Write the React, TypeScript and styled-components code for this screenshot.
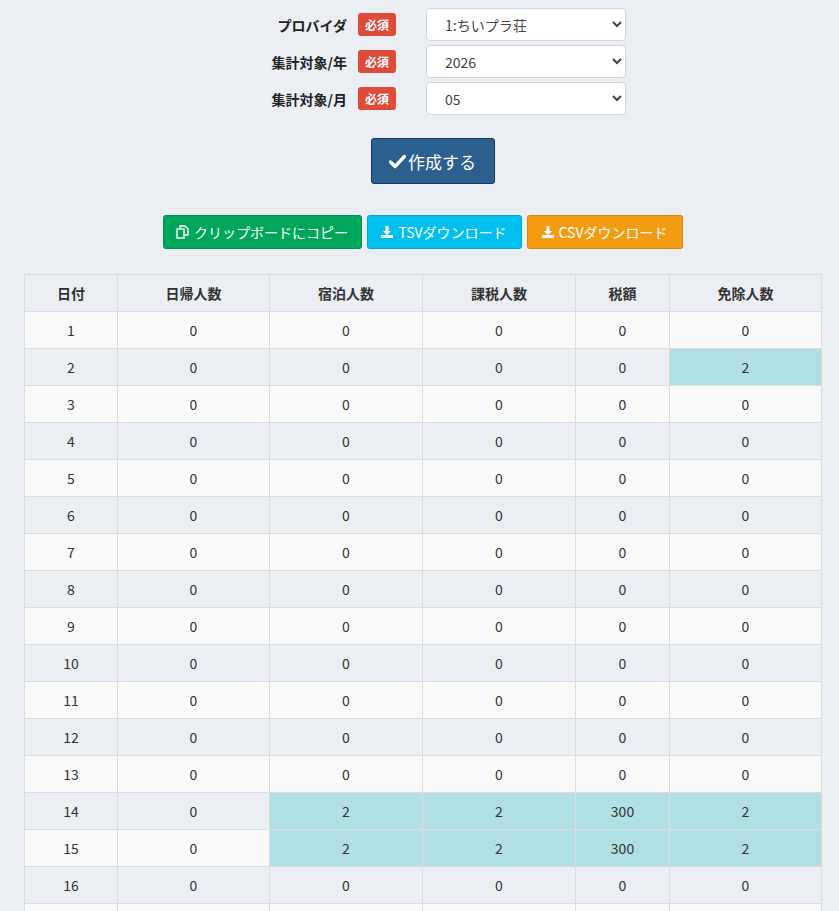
import styled, { createGlobalStyle } from "styled-components";

const Global = createGlobalStyle`
  body {
    margin: 0;
    background: #ebeef3;
    font-family: "Noto Sans CJK JP", "Noto Sans", sans-serif;
    color: #333;
  }
`;

const Page = styled.div`
  padding: 8px 18px 0 24px;
  overflow: hidden;
  height: 911px;
  box-sizing: border-box;
`;

const Form = styled.div`
  display: flex;
  flex-direction: column;
  gap: 4px;
`;

const FormRow = styled.div`
  display: grid;
  grid-template-columns: 334px 68px 200px;
  align-items: center;
`;

const Label = styled.label`
  text-align: right;
  font-weight: bold;
  font-size: 14px;
  color: #222;
  padding-right: 11px;
`;

const Badge = styled.span`
  width: 38px;
  height: 23px;
  background: #dd4b39;
  color: #fff;
  font-size: 12px;
  font-weight: bold;
  border-radius: 3px;
  display: flex;
  align-items: center;
  justify-content: center;
`;

const Select = styled.select`
  height: 33px;
  width: 200px;
  border: 1px solid #d2d6de;
  border-radius: 4px;
  background: #fff;
  padding: 0 10px 0 14px;
  font-size: 14px;
  color: #444;
  font-family: inherit;
`;

const Center = styled.div`
  display: flex;
  justify-content: center;
  gap: ${(p: { gap?: number }) => p.gap ?? 0}px;
  margin-top: ${(p: { top?: number }) => p.top ?? 0}px;
`;

const Submit = styled.button`
  width: 124px;
  height: 46px;
  background: #2a5f8e;
  border: 1px solid #173a5a;
  border-radius: 3px;
  color: #fff;
  font-size: 17px;
  font-family: inherit;
  display: flex;
  align-items: center;
  justify-content: center;
  gap: 2px;
  margin-left: 20px;
`;

const ActionBtn = styled.button<{ bg: string; w: number }>`
  width: ${(p) => p.w}px;
  height: 34px;
  background: ${(p) => p.bg};
  border: 1px solid rgba(0, 0, 0, 0.12);
  border-radius: 3px;
  color: #fff;
  font-size: 14px;
  font-family: inherit;
  display: flex;
  align-items: center;
  justify-content: center;
  gap: 5px;
`;

const Table = styled.table`
  margin-top: 25px;
  width: 797px;
  border-collapse: collapse;
  font-size: 14px;
  text-align: center;
  table-layout: fixed;
  & th, & td {
    border: 1px solid #dcdcdc;
    height: 36px;
    padding: 0;
  }
  & th { background: #ebeef3; font-weight: bold; color: #333; }
`;

const Row = styled.tr<{ odd: boolean }>`
  background: ${(p) => (p.odd ? "#f9f9f9" : "#ebeef3")};
`;

const Cell = styled.td<{ hl?: boolean }>`
  background: ${(p) => (p.hl ? "#b0dfe5" : "transparent")};
`;

const Check = () => (
  <svg width="17" height="15" viewBox="0 0 17 15">
    <path d="M1.5 8 L6 12.5 L15.5 2.5" stroke="#fff" strokeWidth="3.4" fill="none" strokeLinecap="round" strokeLinejoin="round" />
  </svg>
);

const Download = () => (
  <svg width="12" height="12" viewBox="0 0 12 12" fill="#fff">
    <path d="M4.5 0h3v5h2.5L6 9 2 5h2.5z" />
    <rect x="0" y="9" width="12" height="3" />
  </svg>
);

const Copy = () => (
  <svg width="13" height="14" viewBox="0 0 13 14" fill="none" stroke="#fff" strokeWidth="1.4">
    <rect x="1" y="4" width="7" height="9" />
    <path d="M4 4V1h5l3 3v6H8" />
  </svg>
);

const widths = [93, 152, 153, 153, 94, 152];
const headers = ["日付", "日帰人数", "宿泊人数", "課税人数", "税額", "免除人数"];

const data: Record<number, (string | [string])[]> = {
  2: ["0", "0", "0", "0", ["2"]],
  14: ["0", ["2"], ["2"], ["300"], ["2"]],
  15: ["0", ["2"], ["2"], ["300"], ["2"]],
};

export default function App() {
  const days = Array.from({ length: 17 }, (_, i) => i + 1);
  return (
    <Page>
      <Global />
      <Form>
        {[
          ["プロバイダ", "1:ちいプラ荘"],
          ["集計対象/年", "2026"],
          ["集計対象/月", "05"],
        ].map(([l, v]) => (
          <FormRow key={l}>
            <Label>{l}</Label>
            <Badge>必須</Badge>
            <Select defaultValue={v}>
              <option>{v}</option>
            </Select>
          </FormRow>
        ))}
      </Form>
      <Center top={23}>
        <Submit>
          <Check />
          作成する
        </Submit>
      </Center>
      <Center top={31} gap={5}>
        <ActionBtn bg="#00a65a" w={199}>
          <Copy />
          クリップボードにコピー
        </ActionBtn>
        <ActionBtn bg="#00c0ef" w={155}>
          <Download />
          TSVダウンロード
        </ActionBtn>
        <ActionBtn bg="#f39c12" w={156}>
          <Download />
          CSVダウンロード
        </ActionBtn>
      </Center>
      <Table>
        <colgroup>
          {widths.map((w, i) => (
            <col key={i} style={{ width: w }} />
          ))}
        </colgroup>
        <thead>
          <tr>
            {headers.map((h) => (
              <th key={h}>{h}</th>
            ))}
          </tr>
        </thead>
        <tbody>
          {days.map((d) => {
            const cells = data[d] ?? ["0", "0", "0", "0", "0"];
            return (
              <Row key={d} odd={d % 2 === 1}>
                <td>{d <= 16 ? d : ""}</td>
                {cells.map((c, i) =>
                  Array.isArray(c) ? (
                    <Cell key={i} hl>{c[0]}</Cell>
                  ) : (
                    <Cell key={i}>{d <= 16 ? c : ""}</Cell>
                  )
                )}
              </Row>
            );
          })}
        </tbody>
      </Table>
    </Page>
  );
}
